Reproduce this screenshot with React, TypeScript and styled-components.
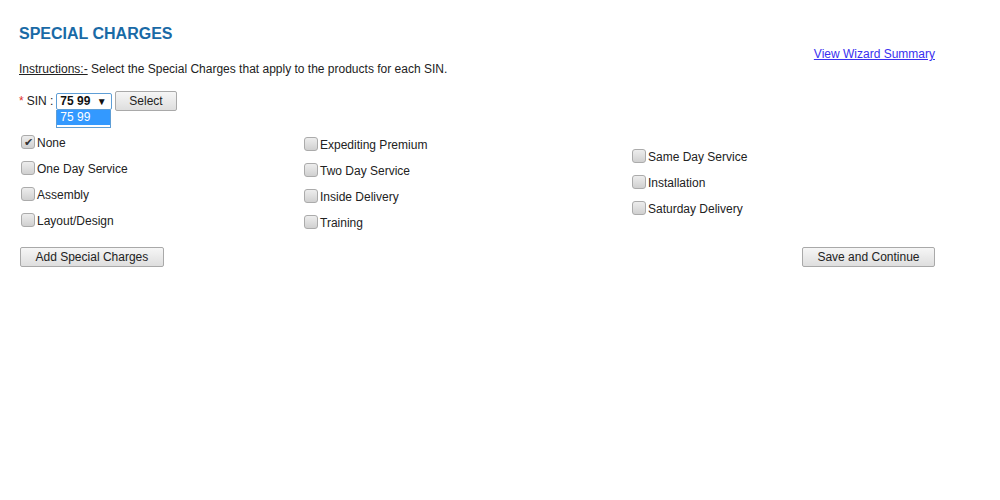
import styled, { createGlobalStyle } from "styled-components";

const GlobalStyle = createGlobalStyle`
  body {
    margin: 0;
    background: #fff;
    font-family: "Liberation Sans", Arial, sans-serif;
    font-size: 12px;
    color: #222;
  }
`;

const COLUMNS = [
  { offset: 0, width: 283, items: [
    { label: "None", checked: true },
    { label: "One Day Service" },
    { label: "Assembly" },
    { label: "Layout/Design" },
  ] },
  { offset: 2, width: 328, items: [
    { label: "Expediting Premium" },
    { label: "Two Day Service" },
    { label: "Inside Delivery" },
    { label: "Training" },
  ] },
  { offset: 14, width: 300, items: [
    { label: "Same Day Service" },
    { label: "Installation" },
    { label: "Saturday Delivery" },
  ] },
];

type Item = { label: string; checked?: boolean };

const App = () => {
  return (
    <Page>
      <GlobalStyle />
      <Title>SPECIAL CHARGES</Title>
      <LinkRow>
        <SummaryLink href="#">View Wizard Summary</SummaryLink>
      </LinkRow>
      <Instructions>
        <u>Instructions:-</u> Select the Special Charges that apply to the products for each SIN.
      </Instructions>

      <SinRow>
        <Required>*</Required>
        <SinLabel>SIN :</SinLabel>
        <SelectWrap>
          <SelectBox>
            75 99 <Arrow>▼</Arrow>
          </SelectBox>
          <DropList>
            <Option>75 99</Option>
          </DropList>
        </SelectWrap>
        <Button>Select</Button>
      </SinRow>

      <Grid>
        {COLUMNS.map((col, i) => (
          <Column key={i} $offset={col.offset} $width={col.width}>
            {col.items.map((item: Item) => (
              <CheckRow key={item.label}>
                <Box $checked={!!item.checked}>{item.checked ? "✔" : ""}</Box>
                {item.label}
              </CheckRow>
            ))}
          </Column>
        ))}
      </Grid>

      <Actions>
        <Button $wide>Add Special Charges</Button>
        <Button $wide>Save and Continue</Button>
      </Actions>
    </Page>
  );
};

const Page = styled.div`
  width: 916px;
  padding: 24px 0 0 19px;
`;

const Title = styled.h1`
  margin: 0;
  font-size: 16px;
  line-height: 19px;
  font-weight: bold;
  color: #196aa6;
`;

const LinkRow = styled.div`
  text-align: right;
  margin-top: 4px;
  line-height: 14px;
`;

const SummaryLink = styled.a`
  color: #3a30f0;
  text-decoration: underline;
  font-size: 12px;
`;

const Instructions = styled.p`
  margin: 1px 0 0;
  line-height: 14px;
`;

const SinRow = styled.div`
  display: flex;
  align-items: center;
  margin-top: 15px;
  height: 20px;
`;

const Required = styled.span`
  color: #e0302a;
  margin-right: 3px;
`;

const SinLabel = styled.span`
  margin-right: 3px;
`;

const SelectWrap = styled.div`
  position: relative;
  margin-right: 3px;
`;

const SelectBox = styled.div`
  width: 51px;
  height: 15px;
  border: 1px solid #5e9ed6;
  border-radius: 2px;
  padding-left: 3px;
  font-weight: bold;
  line-height: 15px;
  color: #111;
`;

const Arrow = styled.span`
  font-size: 10px;
  margin-left: 3px;
`;

const DropList = styled.div`
  position: absolute;
  top: 17px;
  left: 0;
  width: 53px;
  border: 1px solid #5e9ed6;
  border-top: none;
  background: #fff;
  padding-bottom: 2px;
`;

const Option = styled.div`
  background: #3399ff;
  color: #fff;
  line-height: 15px;
  padding-left: 3px;
`;

const Button = styled.button<{ $wide?: boolean }>`
  height: 20px;
  padding: 0 ${(p) => (p.$wide ? "14.5px" : "13px")};
  font-family: "Liberation Sans", Arial, sans-serif;
  font-size: 12px;
  color: #222;
  border: 1px solid #a9a9a9;
  border-radius: 2px;
  background: linear-gradient(#f6f6f6, #dedede);
`;

const Grid = styled.div`
  display: flex;
  margin-top: 19px;
`;

const Column = styled.div<{ $offset: number; $width: number }>`
  width: ${(p) => p.$width}px;
  padding-top: ${(p) => p.$offset}px;
`;

const CheckRow = styled.div`
  display: flex;
  align-items: center;
  height: 26px;
`;

const Box = styled.span<{ $checked: boolean }>`
  width: 12px;
  height: 12px;
  margin: -2px 2px 0 2px;
  border: 1px solid #ababab;
  border-radius: 3px;
  background: linear-gradient(#ededed, #d0d0d0);
  font-size: 11px;
  line-height: 12px;
  text-align: center;
  color: #333;
`;

const Actions = styled.div`
  display: flex;
  justify-content: space-between;
  margin-top: 11px;
  padding-left: 1px;
`;

export default App;
